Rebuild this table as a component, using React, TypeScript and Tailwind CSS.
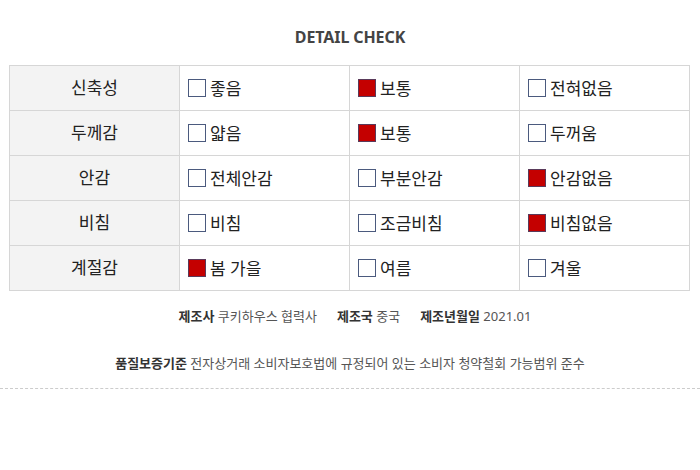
const ROWS: { label: string; options: { text: string; checked: boolean }[] }[] = [
  {
    label: "신축성",
    options: [
      { text: "좋음", checked: false },
      { text: "보통", checked: true },
      { text: "전혀없음", checked: false },
    ],
  },
  {
    label: "두께감",
    options: [
      { text: "얇음", checked: false },
      { text: "보통", checked: true },
      { text: "두꺼움", checked: false },
    ],
  },
  {
    label: "안감",
    options: [
      { text: "전체안감", checked: false },
      { text: "부분안감", checked: false },
      { text: "안감없음", checked: true },
    ],
  },
  {
    label: "비침",
    options: [
      { text: "비침", checked: false },
      { text: "조금비침", checked: false },
      { text: "비침없음", checked: true },
    ],
  },
  {
    label: "계절감",
    options: [
      { text: "봄 가을", checked: true },
      { text: "여름", checked: false },
      { text: "겨울", checked: false },
    ],
  },
];

function Box({ checked }: { checked: boolean }) {
  return checked ? (
    <span className="inline-block h-[18px] w-[18px] shrink-0 border border-[#5a3a5a] bg-[#c40000]" />
  ) : (
    <span className="inline-block h-[18px] w-[18px] shrink-0 border border-[#4b5a7e] bg-white" />
  );
}

export default function App() {
  return (
    <div className="h-[470px] w-[700px] bg-white font-['Noto_Sans','Noto_Sans_CJK_KR',sans-serif] text-[#222]">
      {/* 타이틀 */}
      <div className="flex h-[65px] items-start justify-center pt-[26px]">
        <h2 className="text-[16px] font-bold leading-[22px] tracking-[-0.1px] text-[#444]">
          DETAIL CHECK
        </h2>
      </div>

      {/* 체크 테이블 */}
      <div className="px-[9px]">
        <table className="w-[681px] table-fixed border-collapse">
          <tbody>
            {ROWS.map((row) => (
              <tr key={row.label} className="h-[45px]">
                <td className="w-[170px] border border-[#d6d6d6] bg-[#f3f3f3] text-center text-[17px]">
                  {row.label}
                </td>
                {row.options.map((opt, i) => (
                  <td key={i} className="border border-[#d6d6d6] pl-[8px] text-[17px]">
                    <div className="flex items-center gap-[4px]">
                      <Box checked={opt.checked} />
                      <span className="leading-none">{opt.text}</span>
                    </div>
                  </td>
                ))}
              </tr>
            ))}
          </tbody>
        </table>
      </div>

      {/* 제조 정보 */}
      <div className="mt-[16px] flex justify-center gap-[20px] pl-[10px] text-[13px] text-[#555]">
        <span>
          <b className="font-bold text-[#333]">제조사</b> 쿠키하우스 협력사
        </span>
        <span>
          <b className="font-bold text-[#333]">제조국</b> 중국
        </span>
        <span>
          <b className="font-bold text-[#333]">제조년월일</b> 2021.01
        </span>
      </div>

      <div className="mt-[27px] text-center text-[13px] text-[#555]">
        <b className="font-bold text-[#333]">품질보증기준</b> 전자상거래 소비자보호법에 규정되어 있는 소비자 청약철회 가능범위 준수
      </div>

      <div className="mt-[15px] border-t border-dashed border-[#cccccc]" />
    </div>
  );
}
